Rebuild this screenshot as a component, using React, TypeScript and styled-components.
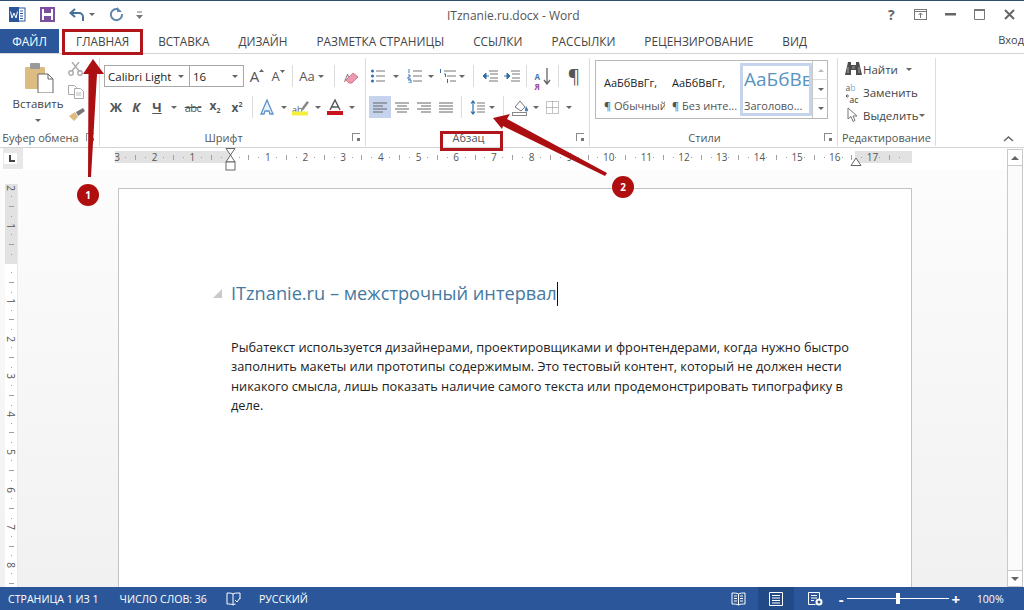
import React from "react";
import styled, { createGlobalStyle } from "styled-components";

const Global = createGlobalStyle`
  html, body { margin: 0; padding: 0; background: #fff; }
  body { font-family: "Open Sans", "Noto Sans", "Liberation Sans", sans-serif; color: #444; }
`;

const Window = styled.div`
  position: relative;
  width: 1024px;
  height: 610px;
  overflow: hidden;
  display: flex;
  flex-direction: column;
  background: #fff;
  border-top: 1px solid #2f4f6f;
  box-sizing: border-box;
`;

/* title bar */
const TitleBar = styled.div`
  height: 27px;
  flex: none;
  display: grid;
  grid-template-columns: 1fr 130px 1fr;
  align-items: center;
`;
const Qat = styled.div`
  display: flex;
  align-items: center;
  padding-left: 9px;
`;
const QatBtn = styled.span<{ $w: number }>`
  width: ${(p) => p.$w}px;
  display: flex;
  justify-content: center;
  align-items: center;
`;
const DocTitle = styled.div`
  font-size: 12px;
  text-align: center;
  color: #555;
  white-space: nowrap;
  position: relative;
  top: 1px;
`;
const WinControls = styled.div`
  display: flex;
  justify-content: flex-end;
  align-items: center;
`;
const WinBtn = styled.span`
  width: 29.5px;
  display: flex;
  justify-content: center;
  align-items: center;
  color: #666;
  font-weight: 700;
  font-size: 14px;
`;

/* tabs */
const TabBar = styled.div`
  height: 26px;
  flex: none;
  display: flex;
  align-items: stretch;
  border-bottom: 1px solid #d4d4d4;
  box-sizing: border-box;
`;
const FileTab = styled.div`
  width: 59px;
  height: 24px;
  margin-top: 1px;
  background: #2b579a;
  color: #fff;
  font-size: 12px;
  display: flex;
  align-items: center;
  justify-content: center;
`;
const Tabs = styled.div`
  display: flex;
  align-items: center;
  gap: 29px;
  padding-left: 17px;
  flex: 1;
`;
const Tab = styled.span`
  font-size: 11.8px;
  color: #444;
  white-space: nowrap;
`;
const SignIn = styled.span`
  font-size: 11px;
  color: #444;
  align-self: center;
  margin-top: -3px;
  white-space: nowrap;
`;

/* ribbon */
const Ribbon = styled.div`
  height: 94px;
  flex: none;
  display: flex;
  border-bottom: 1px solid #d4d4d4;
  box-sizing: border-box;
`;
const Group = styled.div<{ $w: number }>`
  width: ${(p) => p.$w}px;
  flex: none;
  display: flex;
  flex-direction: column;
  margin: 4px 0 1px;
  border-right: 1px solid #dcdcdc;
  box-sizing: border-box;
`;
const GroupBody = styled.div`
  flex: 1;
  min-height: 0;
`;
const GroupLabel = styled.div<{ $plain?: boolean }>`
  height: 18px;
  display: grid;
  grid-template-columns: ${(p) => (p.$plain ? "1fr" : "1fr 18px")};
  align-items: center;
  font-size: 11px;
  color: #555;
  text-align: center;
  white-space: nowrap;
`;
const Launcher = styled.span`
  width: 7px;
  height: 7px;
  border-left: 1px solid #8a8a8a;
  border-top: 1px solid #8a8a8a;
  position: relative;
  justify-self: center;
  &::after {
    content: "";
    position: absolute;
    right: 0;
    bottom: 0;
    width: 3px;
    height: 3px;
    background: #777;
  }
`;
const Row = styled.div<{ $top: number; $left?: number }>`
  display: flex;
  align-items: center;
  height: 22px;
  margin-top: ${(p) => p.$top}px;
  margin-left: ${(p) => p.$left || 0}px;
`;
const Btn = styled.span<{ $w: number; $on?: boolean }>`
  width: ${(p) => p.$w}px;
  height: 22px;
  flex: none;
  display: flex;
  align-items: center;
  justify-content: center;
  background: ${(p) => (p.$on ? "#c5d3ec" : "transparent")};
  color: #444;
`;
const Caret = styled.span<{ $w: number }>`
  width: ${(p) => p.$w}px;
  flex: none;
  display: flex;
  justify-content: center;
  &::after {
    content: "";
    border-left: 3px solid transparent;
    border-right: 3px solid transparent;
    border-top: 3px solid #666;
  }
`;
const Sep = styled.span<{ $m: number }>`
  width: 1px;
  height: 22px;
  flex: none;
  background: #dcdcdc;
  margin: 0 ${(p) => p.$m}px;
`;
const Combo = styled.div<{ $w: number }>`
  width: ${(p) => p.$w}px;
  height: 22px;
  flex: none;
  box-sizing: border-box;
  border: 1px solid #a8a8a8;
  margin-right: -1px;
  background: #fff;
  display: flex;
  align-items: center;
  justify-content: space-between;
  padding: 0 5px 0 3px;
  font-size: 11.5px;
  color: #222;
  white-space: nowrap;
`;
const Glyph = styled.span<{ $bold?: boolean; $it?: boolean; $size?: number; $color?: string }>`
  font-size: ${(p) => p.$size || 12}px;
  font-weight: ${(p) => (p.$bold ? 700 : 400)};
  font-style: ${(p) => (p.$it ? "italic" : "normal")};
  color: ${(p) => p.$color || "#555"};
  line-height: 1;
  white-space: nowrap;
`;
const Struck = styled(Glyph)`
  text-decoration: line-through;
  letter-spacing: -0.5px;
`;
const Under = styled(Glyph)`
  text-decoration: underline;
`;
const Sub = styled.sub`
  font-size: 7px;
`;
const Sup = styled.sup`
  font-size: 7px;
`;
const GrowWrap = styled.span`
  display: inline-flex;
  align-items: flex-start;
  gap: 0;
`;
const IconBox = styled.span<{ $w: number; $h: number }>`
  position: relative;
  width: ${(p) => p.$w}px;
  height: ${(p) => p.$h}px;
  display: inline-block;
  flex: none;
`;
const IconLetters = styled.span<{ $x?: number; $y?: number }>`
  position: absolute;
  left: ${(p) => p.$x || 0}px;
  top: ${(p) => p.$y || 0}px;
  display: block;
  line-height: 1;
`;
const IconOver = styled.svg`
  position: absolute;
  left: 0;
  top: 0;
`;

/* clipboard group */
const ClipLayout = styled.div`
  display: flex;
  height: 100%;
`;
const PasteCol = styled.div`
  width: 64px;
  display: flex;
  flex-direction: column;
  align-items: center;
  padding: 4px 0 0 14px;
  box-sizing: border-box;
  font-size: 11.5px;
  color: #444;
`;
const PasteText = styled.span`
  margin-top: 3px;
  margin-left: -2px;
`;
const PasteCaret = styled(Caret)`
  margin-top: 8px;
  margin-left: -2px;
`;
const ClipTools = styled.div`
  display: flex;
  flex-direction: column;
  gap: 9px;
  padding: 4px 0 0 4px;
`;

/* styles gallery */
const Gallery = styled.div`
  margin: 2px 0 0 5px;
  width: 233px;
  height: 59px;
  box-sizing: border-box;
  border: 1px solid #b8b8b8;
  display: flex;
  align-items: stretch;
  padding-left: 4px;
`;
const StyleItem = styled.div<{ $w: number; $on?: boolean }>`
  width: ${(p) => p.$w}px;
  flex: none;
  margin: 2px 0;
  box-sizing: border-box;
  border: ${(p) => (p.$on ? "3px solid #c5d3ec" : "3px solid transparent")};
  display: flex;
  flex-direction: column;
  justify-content: space-between;
  overflow: hidden;
  white-space: nowrap;
  padding: 5px 0 0 1px;
`;
const StylePreview = styled.span<{ $big?: boolean }>`
  font-size: ${(p) => (p.$big ? 19 : 11)}px;
  color: ${(p) => (p.$big ? "#5b93bf" : "#222")};
  line-height: ${(p) => (p.$big ? 24 : 22)}px;
  margin-top: ${(p) => (p.$big ? -4 : 1)}px;
`;
const StyleName = styled.span`
  font-size: 11px;
  color: #555;
  line-height: 14px;
  padding-bottom: 0;
`;
const GalleryScroll = styled.div`
  width: 15px;
  flex: none;
  border-left: 1px solid #c8c8c8;
  display: grid;
  grid-template-rows: 1fr 1fr 1fr;
`;
const ScrollCell = styled.span<{ $up?: boolean; $pale?: boolean }>`
  display: flex;
  align-items: center;
  justify-content: center;
  border-bottom: 1px solid #dcdcdc;
  &:last-child {
    border-bottom: 0;
  }
  &::after {
    content: "";
    border-left: 3px solid transparent;
    border-right: 3px solid transparent;
    ${(p) =>
      p.$up
        ? "border-bottom: 3px solid #bbb;"
        : "border-top: 3px solid #666;"}
  }
`;

/* editing */
const EditList = styled.div`
  display: flex;
  flex-direction: column;
  gap: 0.5px;
`;
const EditRow = styled.div<{ $left: number }>`
  height: 22.5px;
  display: flex;
  align-items: center;
  padding-left: ${(p) => p.$left}px;
  font-size: 11.5px;
  color: #444;
  white-space: nowrap;
`;
const EditIcon = styled.span`
  width: 20px;
  display: flex;
  justify-content: center;
`;
const Collapse = styled.div`
  flex: 1;
  display: flex;
  align-items: flex-end;
  justify-content: flex-end;
  padding: 0 10px 5px 0;
`;

/* workspace */
const Workspace = styled.div`
  flex: 1;
  min-height: 0;
  display: flex;
`;
const DocArea = styled.div`
  flex: 1;
  min-width: 0;
  display: flex;
  flex-direction: column;
  background: linear-gradient(#fdfdfd, #f1f1f1);
`;
const RulerRow = styled.div`
  height: 22px;
  flex: none;
  display: flex;
  background: #fff;
`;
const TabStop = styled.div`
  width: 20px;
  height: 21px;
  margin-left: 3px;
  background: #e8e8e8;
  display: flex;
  align-items: center;
  padding-left: 1px;
  box-sizing: border-box;
`;
const TabStopInner = styled.span`
  width: 13px;
  height: 11px;
  background: #fff;
  position: relative;
  &::after {
    content: "";
    position: absolute;
    left: 5px;
    top: 2px;
    width: 4px;
    height: 5px;
    border-left: 2px solid #444;
    border-bottom: 2px solid #444;
  }
`;
const HRuler = styled.div`
  position: relative;
  width: 797px;
  height: 12px;
  margin: 3px 0 0 92px;
  display: flex;
  font-size: 10px;
  color: #555;
  background: linear-gradient(
    to right,
    #e2e2e2 0 115px,
    #fff 115px 740px,
    #e2e2e2 740px
  );
`;
const RulerUnit = styled.div<{ $first?: boolean }>`
  width: 37.7px;
  flex: none;
  display: flex;
  align-items: center;
  margin-left: ${(p) => (p.$first ? -2 : 0)}px;
`;
const RulerNum = styled.span`
  width: 8px;
  text-align: center;
  line-height: 12px;
`;
const RulerMarks = styled.span`
  flex: 1;
  display: flex;
  justify-content: space-around;
  align-items: center;
`;
const RulerMark = styled.i<{ $long?: boolean }>`
  display: block;
  width: 1px;
  height: ${(p) => (p.$long ? 5 : 1)}px;
  background: #a0a0a0;
`;
const Hourglass = styled.svg`
  position: absolute;
  left: 110px;
  top: -3px;
`;
const RightIndent = styled.svg`
  position: absolute;
  left: 735px;
  top: 6px;
`;
const DocRow = styled.div`
  flex: 1;
  min-height: 0;
  display: flex;
`;
const VRuler = styled.div`
  width: 12px;
  margin: 14px 0 0 5px;
  flex: none;
  background: linear-gradient(#e2e2e2 0 80px, #fff 80px);
  border-right: 1px solid #e8e8e8;
  box-sizing: content-box;
  display: flex;
  flex-direction: column;
  font-size: 10px;
  color: #555;
  overflow: hidden;
`;
const VUnit = styled.div`
  height: 37.7px;
  flex: none;
  display: flex;
  flex-direction: column;
  align-items: center;
`;
const VNum = styled.span`
  height: 8px;
  width: 12px;
  flex: none;
  display: flex;
  align-items: center;
  justify-content: center;
  line-height: 8px;
  transform: rotate(90deg);
`;
const VMarks = styled.span`
  flex: 1;
  display: flex;
  flex-direction: column;
  justify-content: space-around;
  align-items: center;
`;
const VMark = styled.i<{ $long?: boolean }>`
  display: block;
  height: 1px;
  width: ${(p) => (p.$long ? 5 : 1)}px;
  background: #a0a0a0;
`;
const Page = styled.div`
  width: 794px;
  flex: none;
  margin: 18px 0 0 100px;
  box-sizing: border-box;
  background: #fff;
  border: 1px solid #c4c4c4;
  border-bottom: 0;
  padding: 90px 60px 0 112px;
`;
const Heading = styled.h1`
  position: relative;
  margin: 0;
  font-size: 18.2px;
  font-weight: 400;
  color: #44799f;
  line-height: 28px;
  white-space: nowrap;
  &::before {
    content: "";
    position: absolute;
    left: -18px;
    top: 10px;
    border-left: 9px solid transparent;
    border-bottom: 9px solid #c9c9c9;
  }
`;
const TextCaret = styled.span`
  display: inline-block;
  width: 1px;
  height: 24px;
  background: #111;
  vertical-align: -6px;
`;
const Body = styled.p`
  margin: 31px 0 0;
  font-size: 12.77px;
  line-height: 19.3px;
  color: #222;
  white-space: nowrap;
`;
const VScroll = styled.div`
  width: 16px;
  flex: none;
  margin-right: 1px;
  border-left: 1px solid #c9c9c9;
  border-right: 1px solid #c9c9c9;
  box-sizing: border-box;
  background: #fbfbfb;
  display: flex;
  flex-direction: column;
  justify-content: space-between;
  margin-top: 1px;
`;
const ScrollBtn = styled.span<{ $down?: boolean }>`
  height: 15px;
  background: #fff;
  border-top: 1px solid #c9c9c9;
  border-bottom: 1px solid #c9c9c9;
  display: flex;
  align-items: center;
  justify-content: center;
  &::after {
    content: "";
    border-left: 4px solid transparent;
    border-right: 4px solid transparent;
    ${(p) => (p.$down ? "border-top: 4px solid #666;" : "border-bottom: 4px solid #666;")}
  }
`;

/* status bar */
const StatusBar = styled.div`
  height: 23px;
  flex: none;
  background: #2b579a;
  color: #fff;
  font-size: 10.6px;
  display: flex;
  align-items: center;
  white-space: nowrap;
`;
const StatusText = styled.span<{ $ml: number }>`
  margin-left: ${(p) => p.$ml}px;
  display: inline-flex;
`;
const ViewBtn = styled.span<{ $on?: boolean; $ml?: number }>`
  width: 36px;
  height: 23px;
  margin-left: ${(p) => p.$ml || 0}px;
  display: flex;
  align-items: center;
  justify-content: center;
  background: ${(p) => (p.$on ? "#214a86" : "transparent")};
`;
const Zoom = styled.div`
  width: 126px;
  margin-left: 5px;
  display: flex;
  align-items: center;
  gap: 3px;
  font-size: 15px;
  font-weight: 700;
`;
const ZoomTrack = styled.div`
  position: relative;
  width: 102px;
  height: 1px;
  background: #fff;
`;
const ZoomThumb = styled.span`
  position: absolute;
  left: 49px;
  top: -5px;
  width: 4px;
  height: 11px;
  background: #fff;
`;

/* annotations on top of the screenshot */
const RedBox = styled.div<{ $x: number; $y: number; $w: number; $h: number }>`
  position: absolute;
  left: ${(p) => p.$x}px;
  top: ${(p) => p.$y}px;
  width: ${(p) => p.$w}px;
  height: ${(p) => p.$h}px;
  box-sizing: border-box;
  border: 3px solid #b0161c;
`;
const Arrows = styled.svg`
  position: absolute;
  left: 0;
  top: 0;
  pointer-events: none;
`;
const Badge = styled.div<{ $x: number; $y: number }>`
  position: absolute;
  left: ${(p) => p.$x - 11}px;
  top: ${(p) => p.$y - 11}px;
  width: 22px;
  height: 22px;
  border-radius: 50%;
  background: #af0f0f;
  color: #fff;
  font-size: 10px;
  font-weight: 700;
  display: flex;
  align-items: center;
  justify-content: center;
`;

/* icons */
const WordIcon = () => (
  <svg width="17" height="15" viewBox="0 0 17 15">
    <rect x="6" y="1" width="10" height="13" fill="#fff" stroke="#2b579a" />
    <path d="M11 4h3M11 6.500h3M11 9h3M11 11.500h3" stroke="#2b579a" />
    <rect x="0" y="0" width="10" height="15" fill="#2b579a" />
    <path d="M1.500 4.500 3 11l2-5 2 5 1.500-6.500" fill="none" stroke="#fff" />
  </svg>
);
const SaveIcon = () => (
  <svg width="15" height="15" viewBox="0 0 15 15">
    <path d="M1 1h13v13H1z" fill="none" stroke="#7c4f9e" strokeWidth="2" />
    <rect x="4" y="1" width="7" height="5" fill="#7c4f9e" />
    <rect x="4" y="9" width="7" height="5" fill="#7c4f9e" />
  </svg>
);
const UndoIcon = () => (
  <svg width="16" height="14" viewBox="0 0 16 14">
    <path d="M2 5h8a4 4 0 0 1 4 4v4" fill="none" stroke="#44709e" strokeWidth="2" />
    <path d="M6 1 1.500 5 6 9" fill="none" stroke="#44709e" strokeWidth="2" />
  </svg>
);
const RedoIcon = () => (
  <svg width="15" height="15" viewBox="0 0 15 15">
    <path d="M9 2.200A5.600 5.600 0 1 0 13 7" fill="none" stroke="#5f86ab" strokeWidth="2" />
    <path d="M8 0v5h5" fill="#5f86ab" />
  </svg>
);
const CustomizeIcon = () => (
  <svg width="7" height="8" viewBox="0 0 7 8">
    <path d="M1 1h5" stroke="#777" />
    <path d="M0 4h7L3.500 8z" fill="#777" />
  </svg>
);
const PinIcon = () => (
  <svg width="13" height="11" viewBox="0 0 13 11">
    <rect x=".5" y=".5" width="12" height="10" fill="none" stroke="#777" />
    <path d="M1 2.500h11M6.500 9V4M4.500 6l2-2 2 2" fill="none" stroke="#777" />
  </svg>
);
const MinIcon = () => (
  <svg width="11" height="3" viewBox="0 0 11 3"><rect width="11" height="2.500" fill="#666" /></svg>
);
const MaxIcon = () => (
  <svg width="11" height="11" viewBox="0 0 11 11">
    <path d="M.5 1.500h10v9H.5z" fill="none" stroke="#777" />
    <rect width="11" height="2" fill="#777" />
  </svg>
);
const CloseIcon = () => (
  <svg width="11" height="11" viewBox="0 0 11 11">
    <path d="M1 1l9 9M10 1l-9 9" stroke="#666" strokeWidth="2" />
  </svg>
);
const PasteIcon = () => (
  <svg width="30" height="31" viewBox="0 0 30 31">
    <rect x="1" y="5" width="20" height="22" rx="1" fill="#dcbc82" />
    <rect x="6" y="1" width="10" height="6" rx="1" fill="#9a9a9a" />
    <path d="M14 12h10l5 5v14H14z" fill="#fff" stroke="#666" />
    <path d="M24 12v5h5" fill="none" stroke="#666" />
  </svg>
);
const ScissorsIcon = () => (
  <svg width="15" height="14" viewBox="0 0 15 14">
    <circle cx="3" cy="11" r="2.200" fill="none" stroke="#aaa" strokeWidth="1.400" />
    <circle cx="12" cy="11" r="2.200" fill="none" stroke="#aaa" strokeWidth="1.400" />
    <path d="M4 9 11 0M11 9 4 0" stroke="#aaa" strokeWidth="1.400" />
  </svg>
);
const CopyIcon = () => (
  <svg width="16" height="14" viewBox="0 0 16 14">
    <path d="M.5.500h6l2 2v7h-8z" fill="#fff" stroke="#aaa" />
    <path d="M6.500 3.500h6l3 3v7h-9z" fill="#fff" stroke="#aaa" />
    <path d="M8 8h5M8 10h5" stroke="#bbb" />
  </svg>
);
const PainterIcon = () => (
  <svg width="17" height="13" viewBox="0 0 17 13">
    <path d="M1 8l6-4 3 5-4 4z" fill="#dcbc82" />
    <path d="M8 4l7-4 2 3-7 5z" fill="#777" />
  </svg>
);
const GrowIcon = ({ up }: { up: boolean }) => (
  <GrowWrap>
    <Glyph $size={up ? 15 : 13}>A</Glyph>
    <svg width="5" height="3" viewBox="0 0 10 6">
      <path d={up ? "M0 6h10L5 0z" : "M0 0h10L5 6z"} fill="#666" />
    </svg>
  </GrowWrap>
);
const EraserIcon = () => (
  <IconBox $w={16} $h={16}>
    <IconLetters $x={1} $y={0}><Glyph $size={11} $color="#777">A</Glyph></IconLetters>
    <IconOver width="16" height="16" viewBox="0 0 16 16">
      <path d="M3 12l7-7 5 4-6 6H6z" fill="#ec9ab0" stroke="#d8758f" />
    </IconOver>
  </IconBox>
);
const TextFxIcon = () => (
  <svg width="16" height="16" viewBox="0 0 16 16">
    <path d="M8 1 2 15h3l1-3h4l1 3h3z" fill="#e9f1fa" stroke="#5b93c8" strokeWidth="1.300" />
  </svg>
);
const HighlightIcon = () => (
  <IconBox $w={18} $h={17}>
    <IconLetters $x={0} $y={0}><Glyph $size={9}>ab</Glyph></IconLetters>
    <IconOver width="18" height="17" viewBox="0 0 18 17">
      <path d="M9 10 15 2l2 1.500-6 8z" fill="#888" />
      <rect y="12.500" width="16" height="4" fill="#f5ee3c" />
    </IconOver>
  </IconBox>
);
const FontColorIcon = () => (
  <svg width="16" height="16" viewBox="0 0 16 16">
    <path d="M3 11 8 1l5 10M5 8h6" fill="none" stroke="#555" strokeWidth="1.400" />
    <rect y="12" width="16" height="4" fill="#c8141c" />
  </svg>
);
const BulletsIcon = () => (
  <svg width="14" height="14" viewBox="0 0 14 14">
    <path d="M5 2h9M5 7h9M5 12h9" stroke="#777" />
    <circle cx="1.500" cy="2" r="1.500" fill="#2f6ea8" />
    <circle cx="1.500" cy="7" r="1.500" fill="#2f6ea8" />
    <circle cx="1.500" cy="12" r="1.500" fill="#2f6ea8" />
  </svg>
);
const NumbersIcon = () => (
  <svg width="15" height="14" viewBox="0 0 15 14">
    <path d="M6 2h9M6 7h9M6 12h9" stroke="#777" />
    <path d="M2 0v4M1 6h2v2H1v2h3M1 11h3v3H1" fill="none" stroke="#2f6ea8" strokeWidth=".9" />
  </svg>
);
const MultiIcon = () => (
  <svg width="17" height="14" viewBox="0 0 17 14">
    <path d="M5 2h12M8 7h9M11 12h6" stroke="#777" />
    <path d="M1.500 0v4M5 5h1.500v3M8.500 10v4" fill="none" stroke="#2f6ea8" />
  </svg>
);
const IndentIcon = ({ inc }: { inc?: boolean }) => (
  <svg width="16" height="12" viewBox="0 0 16 12">
    <path d="M7 1h9M8 4h8M8 8h8M7 11h9" stroke="#777" />
    <path d={inc ? "M0 6h4M3 3l3 3-3 3z" : "M2 6h5M4 3 1 6l3 3z"} fill="#2f6ea8" stroke="#2f6ea8" />
  </svg>
);
const SortIcon = () => (
  <IconBox $w={16} $h={18}>
    <IconLetters $x={0} $y={-1}><Glyph $bold $size={8} $color="#3f78b0">А</Glyph></IconLetters>
    <IconLetters $x={0} $y={9}><Glyph $bold $size={8} $color="#9a4a9a">Я</Glyph></IconLetters>
    <IconOver width="16" height="18" viewBox="0 0 16 18">
      <path d="M12 1v15M9 13l3 4 3-4" fill="none" stroke="#666" strokeWidth="1.300" />
    </IconOver>
  </IconBox>
);
const AlignIcon = ({ kind }: { kind: "l" | "c" | "r" | "j" }) => {
  const short: Record<string, string> = {
    l: "M0 1h14M0 4h10M0 7h14M0 10h10",
    c: "M0 1h14M2 4h10M0 7h14M2 10h10",
    r: "M0 1h14M4 4h10M0 7h14M4 10h10",
    j: "M0 1h14M0 4h14M0 7h14M0 10h14",
  };
  return (
    <svg width="14" height="11" viewBox="0 0 14 11">
      <path d={short[kind]} stroke="#666" />
    </svg>
  );
};
const LineSpacingIcon = () => (
  <svg width="15" height="15" viewBox="0 0 15 15">
    <path d="M7 3h8M7 6h8M7 9h8M7 12h8" stroke="#777" />
    <path d="M3 1v13M1 3.500 3 1l2 2.500M1 11.500 3 14l2-2.500" fill="none" stroke="#2f6ea8" strokeWidth="1.200" />
  </svg>
);
const ShadingIcon = () => (
  <svg width="18" height="17" viewBox="0 0 18 17">
    <path d="M3 8 8 2l5 6-4 4z" fill="#fff" stroke="#777" />
    <path d="M14 7c1 2 2 3 2 4a1.500 1.500 0 0 1-3 0c0-1 .5-2 1-4z" fill="#3f78b0" />
    <rect x=".5" y="13.500" width="14" height="3" fill="#fff" stroke="#888" />
  </svg>
);
const BordersIcon = () => (
  <svg width="13" height="13" viewBox="0 0 13 13">
    <path d="M.5.500h12v12H.5zM6.500.500v12M.5 6.500h12" fill="none" stroke="#888" strokeDasharray="1 1" />
  </svg>
);
const BinocularsIcon = () => (
  <svg width="17" height="16" viewBox="0 0 17 16">
    <path d="M3 1h3v3h5V1h3l3 13h-6V9H6v5H0z" fill="#4d4d4d" />
    <path d="M3 6v6M14 6v6" stroke="#aaa" />
    <path d="M7 5h3v3H7z" fill="#777" />
  </svg>
);
const ReplaceIcon = () => (
  <IconBox $w={17} $h={18}>
    <IconLetters $x={1} $y={-2}><Glyph $size={8.5}>a</Glyph><Glyph $size={8.5} $color="#7db0dc">b</Glyph></IconLetters>
    <IconLetters $x={5} $y={10}><Glyph $size={8.5} $color="#333">ac</Glyph></IconLetters>
    <IconOver width="17" height="18" viewBox="0 0 17 18">
      <path d="M1 13h3M2.500 11.500 1 13l1.500 1.500" fill="none" stroke="#555" />
    </IconOver>
  </IconBox>
);
const CursorIcon = () => (
  <svg width="12" height="16" viewBox="0 0 12 16">
    <path d="M1 1v11l3-2.500 2 5 2-1-2-4.500h4z" fill="#fff" stroke="#777" />
  </svg>
);
const Chevron = () => (
  <svg width="11" height="6" viewBox="0 0 11 6">
    <path d="M1 5l4.500-4L10 5" fill="none" stroke="#666" strokeWidth="1.500" />
  </svg>
);
const BookCheckIcon = () => (
  <svg width="15" height="14" viewBox="0 0 15 14">
    <path d="M7 2C6 1 3 1 1 1v11c2 0 5 0 6 1 .5-.6 1.500-.8 2.500-.9M7 2c1-1 4-1 7-1v6M7 2v11" fill="none" stroke="#fff" />
    <path d="M9 8l2 2 3-4" fill="none" stroke="#fff" />
  </svg>
);
const ReadIcon = () => (
  <svg width="15" height="14" viewBox="0 0 15 14">
    <path d="M7.500 2C6 1 3 1 1 1v11c2 0 5 0 6.500 1 1.500-1 4.500-1 6.500-1V1c-2 0-5 0-6.500 1zM7.500 2v11M3 4h3M3 6.500h3M3 9h3M9 4h3M9 6.500h3M9 9h3" fill="none" stroke="#fff" />
  </svg>
);
const PrintIcon = () => (
  <svg width="14" height="14" viewBox="0 0 14 14">
    <path d="M.5.500h13v13H.5zM3 3.500h8M3 6h8M3 8.500h8M3 11h8" fill="none" stroke="#fff" />
  </svg>
);
const WebIcon = () => (
  <svg width="15" height="14" viewBox="0 0 15 14">
    <path d="M.5.500h11v8M.5.500v12h7M3 3.500h6M3 6h6M3 8.500h3" fill="none" stroke="#fff" />
    <circle cx="11" cy="10" r="3.500" fill="#fff" />
    <circle cx="11" cy="10" r="1.500" fill="#2b579a" />
  </svg>
);

const rulerLabels = ["3", "2", "1", "", ...Array.from({ length: 17 }, (_, i) => String(i + 1))];
const vRulerLabels = ["2", "1", "", "1", "2", "3", "4", "5", "6", "7", "8"];

const tabs = [
  "ВСТАВКА",
  "ДИЗАЙН",
  "РАЗМЕТКА СТРАНИЦЫ",
  "ССЫЛКИ",
  "РАССЫЛКИ",
  "РЕЦЕНЗИРОВАНИЕ",
  "ВИД",
];

export default function App() {
  return (
    <Window>
      <Global />
      <TitleBar>
        <Qat>
          <QatBtn $w={17}><WordIcon /></QatBtn>
          <QatBtn $w={42}><SaveIcon /></QatBtn>
          <QatBtn $w={18}><UndoIcon /></QatBtn>
          <Caret $w={12} />
          <QatBtn $w={36}><RedoIcon /></QatBtn>
          <QatBtn $w={10}><CustomizeIcon /></QatBtn>
        </Qat>
        <DocTitle>ITznanie.ru.docx - Word</DocTitle>
        <WinControls>
          <WinBtn>?</WinBtn>
          <WinBtn><PinIcon /></WinBtn>
          <WinBtn><MinIcon /></WinBtn>
          <WinBtn><MaxIcon /></WinBtn>
          <WinBtn><CloseIcon /></WinBtn>
        </WinControls>
      </TitleBar>

      <TabBar>
        <FileTab>ФАЙЛ</FileTab>
        <Tabs>
          <Tab>ГЛАВНАЯ</Tab>
          {tabs.map((t) => (
            <Tab key={t}>{t}</Tab>
          ))}
        </Tabs>
        <SignIn>Вход</SignIn>
      </TabBar>

      <Ribbon>
        <Group $w={100}>
          <GroupBody>
            <ClipLayout>
              <PasteCol>
                <PasteIcon />
                <PasteText>Вставить</PasteText>
                <PasteCaret $w={10} />
              </PasteCol>
              <ClipTools>
                <ScissorsIcon />
                <CopyIcon />
                <PainterIcon />
              </ClipTools>
            </ClipLayout>
          </GroupBody>
          <GroupLabel>
            <span>Буфер обмена</span>
            <Launcher />
          </GroupLabel>
        </Group>

        <Group $w={266}>
          <GroupBody>
            <Row $top={7} $left={4}>
              <Combo $w={86}>Calibri Light<Caret $w={6} /></Combo>
              <Combo $w={55}>16<Caret $w={6} /></Combo>
              <Btn $w={28}><GrowIcon up /></Btn>
              <Btn $w={14}><GrowIcon up={false} /></Btn>
              <Sep $m={7} />
              <Btn $w={14}><Glyph $size={13}>Aa</Glyph></Btn>
              <Caret $w={14} />
              <Sep $m={6} />
              <Btn $w={20}><EraserIcon /></Btn>
            </Row>
            <Row $top={9} $left={4}>
              <Btn $w={24}><Glyph $bold $size={13}>Ж</Glyph></Btn>
              <Btn $w={16}><Glyph $bold $it $size={13}>К</Glyph></Btn>
              <Btn $w={26}><Under $bold $size={13}>Ч</Under></Btn>
              <Caret $w={8} />
              <Btn $w={30}><Struck $size={11}>abc</Struck></Btn>
              <Btn $w={14}><Glyph $bold $size={12}>x<Sub>2</Sub></Glyph></Btn>
              <Btn $w={30}><Glyph $bold $size={12}>x<Sup>2</Sup></Glyph></Btn>
              <Sep $m={0} />
              <Btn $w={28}><TextFxIcon /></Btn>
              <Caret $w={6} />
              <Btn $w={28}><HighlightIcon /></Btn>
              <Caret $w={6} />
              <Btn $w={28}><FontColorIcon /></Btn>
              <Caret $w={6} />
            </Row>
          </GroupBody>
          <GroupLabel>
            <span>Шрифт</span>
            <Launcher />
          </GroupLabel>
        </Group>

        <Group $w={224}>
          <GroupBody>
            <Row $top={7} $left={0}>
              <Btn $w={24}><BulletsIcon /></Btn>
              <Caret $w={12} />
              <Btn $w={24}><NumbersIcon /></Btn>
              <Caret $w={9} />
              <Btn $w={24}><MultiIcon /></Btn>
              <Caret $w={6} />
              <Sep $m={8} />
              <Btn $w={16}><IndentIcon /></Btn>
              <Btn $w={28}><IndentIcon inc /></Btn>
              <Sep $m={0} />
              <Btn $w={31}><SortIcon /></Btn>
              <Sep $m={0} />
              <Btn $w={30}><Glyph $size={19}>¶</Glyph></Btn>
            </Row>
            <Row $top={9} $left={3}>
              <Btn $w={22} $on><AlignIcon kind="l" /></Btn>
              <Btn $w={22}><AlignIcon kind="c" /></Btn>
              <Btn $w={22}><AlignIcon kind="r" /></Btn>
              <Btn $w={22}><AlignIcon kind="j" /></Btn>
              <Sep $m={4} />
              <Btn $w={22}><LineSpacingIcon /></Btn>
              <Caret $w={8} />
              <Sep $m={7} />
              <Btn $w={20}><ShadingIcon /></Btn>
              <Caret $w={10} />
              <Btn $w={22}><BordersIcon /></Btn>
              <Caret $w={12} />
            </Row>
          </GroupBody>
          <GroupLabel>
            <span>Абзац</span>
            <Launcher />
          </GroupLabel>
        </Group>

        <Group $w={248}>
          <GroupBody>
            <Gallery>
              <StyleItem $w={68}>
                <StylePreview>АаБбВвГг,</StylePreview>
                <StyleName>¶ Обычный</StyleName>
              </StyleItem>
              <StyleItem $w={72}>
                <StylePreview>АаБбВвГг,</StylePreview>
                <StyleName>¶ Без инте...</StyleName>
              </StyleItem>
              <StyleItem $w={72} $on>
                <StylePreview $big>АаБбВв</StylePreview>
                <StyleName>Заголово...</StyleName>
              </StyleItem>
              <GalleryScroll>
                <ScrollCell $up />
                <ScrollCell />
                <ScrollCell />
              </GalleryScroll>
            </Gallery>
          </GroupBody>
          <GroupLabel>
            <span>Стили</span>
            <Launcher />
          </GroupLabel>
        </Group>

        <Group $w={98}>
          <GroupBody>
            <EditList>
              <EditRow $left={5}>
                <EditIcon><BinocularsIcon /></EditIcon>
                Найти
                <Caret $w={22} />
              </EditRow>
              <EditRow $left={5}>
                <EditIcon><ReplaceIcon /></EditIcon>
                Заменить
              </EditRow>
              <EditRow $left={5}>
                <EditIcon><CursorIcon /></EditIcon>
                Выделить
                <Caret $w={8} />
              </EditRow>
            </EditList>
          </GroupBody>
          <GroupLabel $plain>
            <span>Редактирование</span>
          </GroupLabel>
        </Group>

        <Collapse><Chevron /></Collapse>
      </Ribbon>

      <Workspace>
        <DocArea>
          <RulerRow>
            <TabStop><TabStopInner /></TabStop>
            <HRuler>
              {rulerLabels.map((n, i) => (
                <RulerUnit key={i} $first={i === 0}>
                  <RulerNum>{n}</RulerNum>
                  <RulerMarks>
                    <RulerMark />
                    <RulerMark $long />
                    <RulerMark />
                  </RulerMarks>
                </RulerUnit>
              ))}
              <Hourglass width="11" height="23" viewBox="0 0 11 23">
                <path d="M1 .5h9L5.500 7zM5.500 7 1 14h9z" fill="#fff" stroke="#666" />
                <rect x="1" y="14" width="9" height="8" fill="#fff" stroke="#666" />
              </Hourglass>
              <RightIndent width="12" height="9" viewBox="0 0 12 9">
                <path d="M1 8.500 6 1l5 7.500z" fill="#fff" stroke="#666" />
              </RightIndent>
            </HRuler>
          </RulerRow>
          <DocRow>
            <VRuler>
              {vRulerLabels.map((n, i) => (
                <VUnit key={i}>
                  <VNum>{n}</VNum>
                  <VMarks>
                    <VMark />
                    <VMark $long />
                    <VMark />
                  </VMarks>
                </VUnit>
              ))}
            </VRuler>
            <Page>
              <Heading>
                ITznanie.ru – межстрочный интервал
                <TextCaret />
              </Heading>
              <Body>
                Рыбатекст используется дизайнерами, проектировщиками и фронтендерами, когда нужно быстро
                <br />
                заполнить макеты или прототипы содержимым. Это тестовый контент, который не должен нести
                <br />
                никакого смысла, лишь показать наличие самого текста или продемонстрировать типографику в
                <br />
                деле.
              </Body>
            </Page>
          </DocRow>
        </DocArea>
        <VScroll>
          <ScrollBtn />
          <ScrollBtn $down />
        </VScroll>
      </Workspace>

      <StatusBar>
        <StatusText $ml={8}>СТРАНИЦА 1 ИЗ 1</StatusText>
        <StatusText $ml={21}>ЧИСЛО СЛОВ: 36</StatusText>
        <StatusText $ml={19}><BookCheckIcon /></StatusText>
        <StatusText $ml={18}>РУССКИЙ</StatusText>
        <StatusText $ml={423}><ReadIcon /></StatusText>
        <ViewBtn $on $ml={12}><PrintIcon /></ViewBtn>
        <ViewBtn $ml={4}><WebIcon /></ViewBtn>
        <Zoom>
          <span>-</span>
          <ZoomTrack><ZoomThumb /></ZoomTrack>
          <span>+</span>
        </Zoom>
        <StatusText $ml={12}>100%</StatusText>
      </StatusBar>

      <RedBox $x={62} $y={28} $w={81} $h={26} />
      <RedBox $x={440} $y={130} $w={63} $h={20} />
      <Arrows width="1024" height="610" viewBox="0 0 1024 610">
        <path d="M93 58 104 73 97 73 91 176 88 176 88.500 73 83 73z" fill="#ab0f12" />
        <path d="M493 117 510 113 507 118 607 172 605 175 503 125 502 128z" fill="#ab0f12" />
      </Arrows>
      <Badge $x={88} $y={194}>1</Badge>
      <Badge $x={623} $y={186}>2</Badge>
    </Window>
  );
}
